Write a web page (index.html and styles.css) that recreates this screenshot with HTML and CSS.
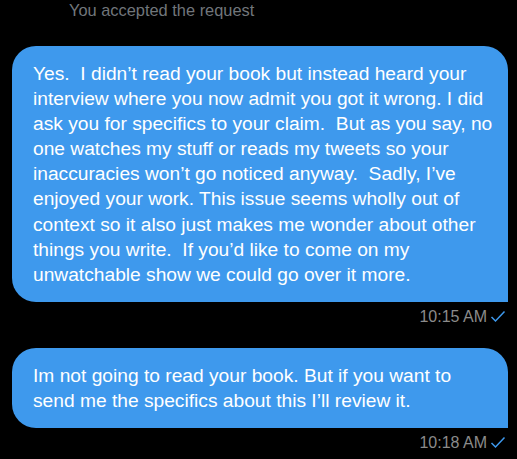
FILE: index.html
```html
<!DOCTYPE html>
<html lang="en">
<head>
    <meta charset="UTF-8">
    <title>Messages</title>
    <link rel="stylesheet" href="styles.css">
</head>
<body>
    <div class="notice">You accepted the request</div>

    <div class="thread">
        <!-- first message -->
        <div class="message">
            <div class="bubble">Yes.&nbsp; I didn’t read your book but instead heard your interview where you now admit you got it wrong. I did ask you for specifics to your claim.&nbsp; But as you say, no one watches my stuff or reads my tweets so your inaccuracies won’t go noticed anyway.&nbsp; Sadly, I’ve enjoyed your work. This issue seems wholly out of context so it also just makes me wonder about other things you write.&nbsp; If you’d like to come on my unwatchable show we could go over it more.</div>
            <div class="meta">
                <span class="time">10:15 AM</span>
                <svg class="check" width="16" height="13" viewBox="0 0 16 13"><path d="M1.5 7 L5.5 11 L14.5 1.5" fill="none" stroke="#3e99ed" stroke-width="1.5"/></svg>
            </div>
        </div>

        <!-- second message -->
        <div class="message">
            <div class="bubble">Im not going to read your book. But if you want to send me the specifics about this I’ll review it.</div>
            <div class="meta">
                <span class="time">10:18 AM</span>
                <svg class="check" width="16" height="13" viewBox="0 0 16 13"><path d="M1.5 7 L5.5 11 L14.5 1.5" fill="none" stroke="#3e99ed" stroke-width="1.5"/></svg>
            </div>
        </div>
    </div>
</body>
</html>
```

FILE: styles.css
```css
body {
    font-family: "Liberation Sans", Arial, sans-serif;
    background: #000;
    margin: 0;
    padding: 0;
    color: #fff;
    overflow: hidden;
}

.notice {
    color: #71767b;
    font-size: 16.4px;
    padding-left: 69px;
    margin-top: -1px;
    line-height: 22px;
}

.thread {
    padding: 0 9px 0 12px;
    margin-top: 25px;
    display: flex;
    flex-direction: column;
    gap: 22px;
}

.bubble {
    background: #3e99ed;
    color: #fff;
    font-size: 19.2px;
    line-height: 25.1px;
    padding: 15px 12px 15px 21px;
    border-radius: 24px 24px 0 24px;
}

.meta {
    display: flex;
    justify-content: flex-end;
    align-items: center;
    gap: 3px;
    margin-top: 5px;
    padding-right: 2px;
}

.time {
    color: #8b8b8b;
    font-size: 16px;
    line-height: 19px;
}

.check {
    display: block;
}
```
